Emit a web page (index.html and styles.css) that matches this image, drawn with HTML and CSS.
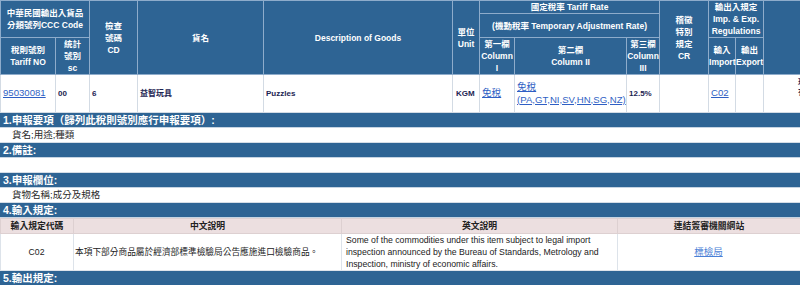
FILE: index.html
```html
<!DOCTYPE html>
<html lang="zh-Hant">
<head>
<meta charset="utf-8">
<title>稅則稅率查詢</title>
<link rel="stylesheet" href="styles.css">
</head>
<body>
<div class="page">
  <div class="tariff-wrap">
    <table class="tariff">
      <colgroup>
        <col class="c-tariff">
        <col class="c-sc">
        <col class="c-cd">
        <col class="c-name">
        <col class="c-desc">
        <col class="c-unit">
        <col class="c-col1">
        <col class="c-col2">
        <col class="c-col3">
        <col class="c-cr">
        <col class="c-imp">
        <col class="c-exp">
        <col class="c-extra">
      </colgroup>
      <thead>
        <tr class="h1">
          <th colspan="2" rowspan="2">中華民國輸出入貨品<br>分類號列CCC Code</th>
          <th rowspan="3">檢查<br>號碼<br>CD</th>
          <th rowspan="3">貨名</th>
          <th rowspan="3">Description of Goods</th>
          <th rowspan="3">單位<br>Unit</th>
          <th colspan="3">國定稅率 Tariff Rate</th>
          <th rowspan="3">稽徵<br>特別<br>規定<br>CR</th>
          <th colspan="2" rowspan="2">輸出入規定<br>Imp. &amp; Exp.<br>Regulations</th>
          <th rowspan="3"></th>
        </tr>
        <tr class="h2">
          <th colspan="3">(機動稅率 Temporary Adjustment Rate)</th>
        </tr>
        <tr class="h3">
          <th>稅則號別<br>Tariff NO</th>
          <th>統計<br>號別<br>sc</th>
          <th>第一欄<br>Column<br>I</th>
          <th>第二欄<br>Column II</th>
          <th>第三欄<br>Column<br>III</th>
          <th>輸入<br>Import</th>
          <th>輸出<br>Export</th>
        </tr>
      </thead>
      <tbody>
        <tr class="data">
          <td><a class="lnk" href="#">95030081</a></td>
          <td class="val">00</td>
          <td class="val">6</td>
          <td class="val">益智玩具</td>
          <td class="val">Puzzles</td>
          <td class="val unit">KGM</td>
          <td><a class="lnk" href="#">免稅</a></td>
          <td><a class="lnk" href="#">免稅<br>(PA,GT,NI,SV,HN,SG,NZ)</a></td>
          <td class="val">12.5%</td>
          <td></td>
          <td><a class="lnk" href="#">C02</a></td>
          <td></td>
          <td class="val extra">現行<br>有效</td>
        </tr>
      </tbody>
    </table>
  </div>

  <section class="sec">
    <h2 class="sec-title">1.申報要項（歸列此稅則號別應行申報要項）:</h2>
    <div class="sec-body">貨名;用途;種類</div>
  </section>
  <section class="sec">
    <h2 class="sec-title">2.備註:</h2>
    <div class="sec-body"></div>
  </section>
  <section class="sec">
    <h2 class="sec-title">3.申報欄位:</h2>
    <div class="sec-body">貨物名稱;成分及規格</div>
  </section>
  <section class="sec">
    <h2 class="sec-title">4.輸入規定:</h2>
    <table class="rules">
      <colgroup>
        <col class="r-code">
        <col class="r-zh">
        <col class="r-en">
        <col class="r-link">
      </colgroup>
      <thead>
        <tr>
          <th>輸入規定代碼</th>
          <th>中文說明</th>
          <th>英文說明</th>
          <th>連結簽審機關網站</th>
        </tr>
      </thead>
      <tbody>
        <tr>
          <td class="code">C02</td>
          <td class="zh">本項下部分商品屬於經濟部標準檢驗局公告應施進口檢驗商品。</td>
          <td class="en">Some of the commodities under this item subject to legal import inspection announced by the Bureau of Standards, Metrology and Inspection, ministry of economic affairs.</td>
          <td class="agency"><a class="lnk2" href="#">標檢局</a></td>
        </tr>
      </tbody>
    </table>
  </section>
  <section class="sec">
    <h2 class="sec-title">5.輸出規定:</h2>
  </section>
</div>
</body>
</html>
```

FILE: styles.css
```css
* { box-sizing: border-box; }
html, body {
  margin: 0;
  padding: 0;
  background: #ffffff;
  overflow: hidden;
}
body {
  font-family: "Liberation Sans", "Noto Sans CJK TC", sans-serif;
  color: #222222;
}
.page { width: 800px; }

/* main tariff grid */
.tariff-wrap { width: 800px; overflow: hidden; }
.tariff {
  table-layout: fixed;
  border-collapse: collapse;
  width: 903px;
}
.c-tariff { width: 55px; }
.c-sc { width: 34px; }
.c-cd { width: 48px; }
.c-name { width: 126px; }
.c-desc { width: 189px; }
.c-unit { width: 27px; }
.c-col1 { width: 35px; }
.c-col2 { width: 112px; }
.c-col3 { width: 33px; }
.c-cr { width: 49px; }
.c-imp { width: 27px; }
.c-exp { width: 28px; }
.c-extra { width: 140px; }

.tariff th {
  background: #2e6494;
  color: #ffffff;
  font-size: 8.5px;
  font-weight: bold;
  line-height: 12px;
  padding: 0;
  border: 1px solid #8eaccb;
  text-align: center;
  vertical-align: middle;
  white-space: nowrap;
}
.tariff tr.h1 { height: 13px; }
.tariff tr.h2 { height: 23px; }
.tariff tr.h3 { height: 37px; }
.tariff tr.data { height: 38px; }

.tariff td {
  border: 1px solid #d3dbe4;
  padding: 0 1px 0 2px;
  vertical-align: middle;
  font-size: 8px;
  line-height: 12px;
  white-space: nowrap;
}
.tariff td.val {
  color: #1c2452;
  font-weight: bold;
}
.tariff td.unit { padding-left: 3px; }
.tariff td.extra {
  padding: 3px 0 0 34px;
  line-height: 10px;
  vertical-align: top;
}
.lnk {
  color: #2f5fc4;
  font-size: 9.6px;
  text-decoration: underline;
}

/* sections */
.sec { margin: 0; }
.sec-title {
  margin: 0;
  height: 15px;
  background: #2e6494;
  color: #ffffff;
  font-size: 10.5px;
  font-weight: bold;
  line-height: 14px;
  padding-left: 3px;
  border-bottom: 1px solid #c6d4e2;
  white-space: nowrap;
}
.sec-body {
  height: 15px;
  font-size: 9.5px;
  line-height: 14px;
  padding-left: 12px;
  color: #2a2a2a;
  border-bottom: 1px solid #d5dde6;
}

/* import rules */
.rules {
  width: 800px;
  table-layout: fixed;
  border-collapse: collapse;
}
.r-code { width: 73px; }
.r-zh { width: 268px; }
.r-en { width: 276px; }
.r-link { width: 183px; }
.rules th {
  background: #ecdfe0;
  color: #222222;
  font-size: 8.8px;
  font-weight: bold;
  line-height: 12px;
  height: 15px;
  padding: 0;
  border: 1px solid #ddd0d1;
  text-align: center;
}
.rules td {
  font-size: 8.7px;
  line-height: 12px;
  height: 35px;
  padding: 0 2px 0 1px;
  border: 1px solid #dde3ea;
  color: #222222;
  vertical-align: middle;
}
.rules td.code { text-align: center; }
.rules td.en { padding-left: 4px; }
.rules td.agency { text-align: center; }
.lnk2 {
  color: #4a80d6;
  font-size: 9.5px;
  text-decoration: underline;
}
```
